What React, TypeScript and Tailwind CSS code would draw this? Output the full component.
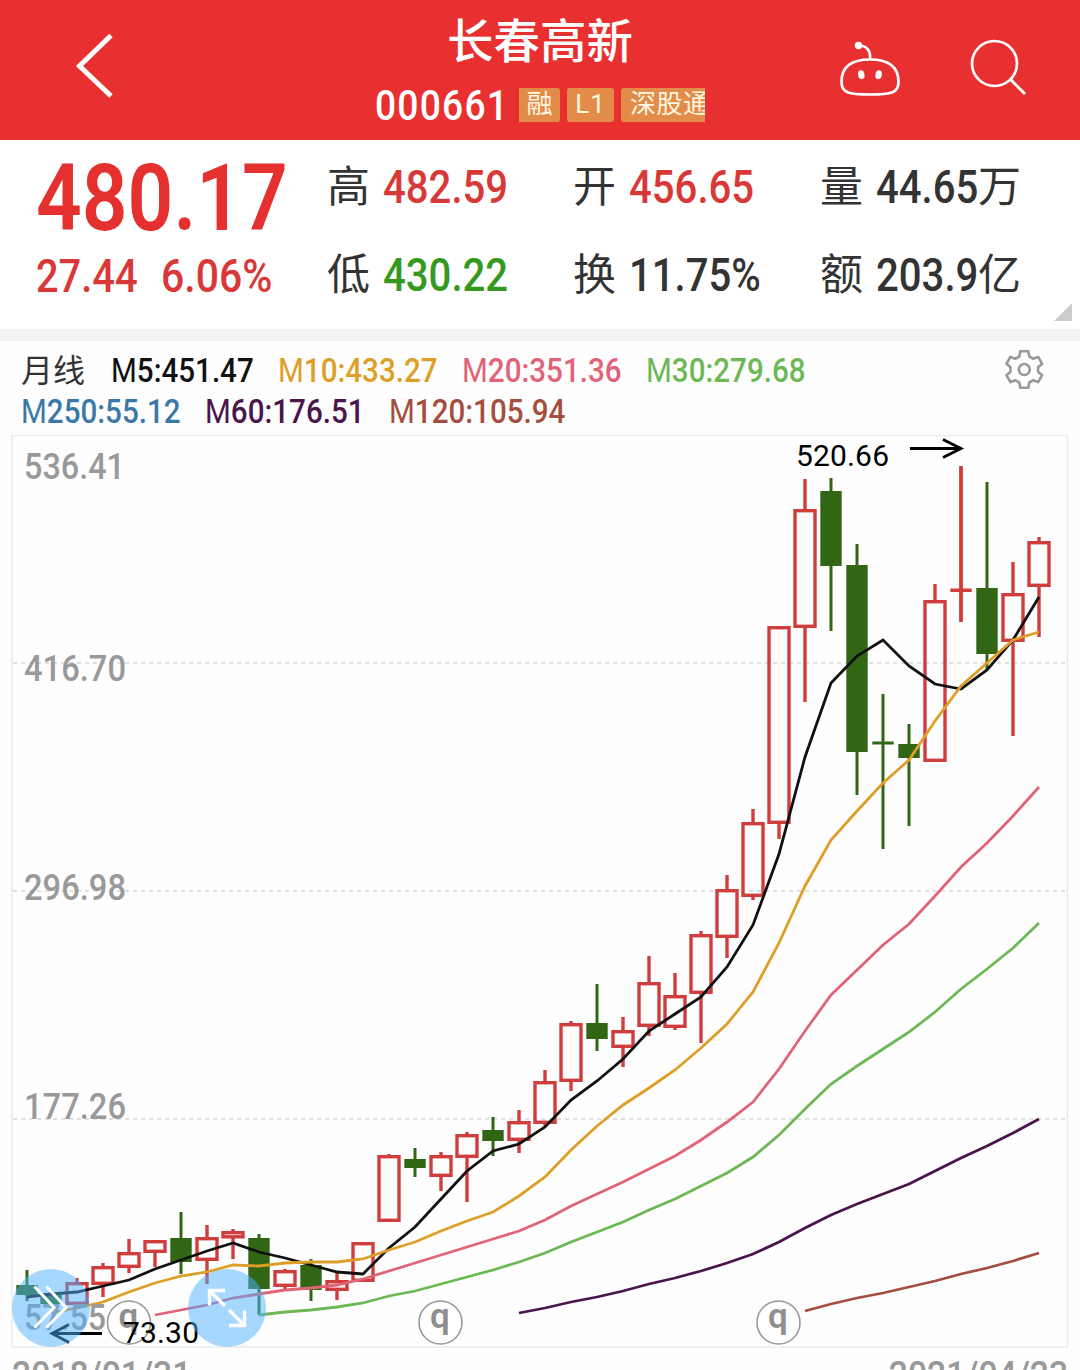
import React from 'react';
import clsx from 'clsx';

// x, high, body top, body bottom, low, 'u' (rise) or 'd' (fall)
type Candle = [number, number, number, number, number, 'u' | 'd'];

const candles: Candle[] = [
    [27, 1270, 1285, 1295, 1301, 'd'],
    [51, 1293, 1293, 1304, 1308, 'd'],
    [77, 1278, 1282, 1305, 1305, 'u'],
    [103, 1263, 1266, 1285, 1297, 'u'],
    [129, 1239, 1252, 1268, 1273, 'u'],
    [155, 1240, 1240, 1253, 1267, 'u'],
    [181, 1212, 1238, 1262, 1274, 'd'],
    [207, 1225, 1237, 1261, 1284, 'u'],
    [233, 1229, 1231, 1238.5, 1259, 'u'],
    [259, 1234, 1238, 1289, 1315, 'd'],
    [285, 1269, 1270, 1287, 1290, 'u'],
    [311, 1259, 1265, 1290, 1301, 'd'],
    [337, 1272, 1280, 1291, 1300, 'u'],
    [363, 1242, 1242, 1282, 1282, 'u'],
    [389, 1154, 1155, 1222, 1222, 'u'],
    [415, 1148, 1159, 1168, 1177, 'd'],
    [441, 1152, 1155, 1177, 1191, 'u'],
    [467, 1132, 1134, 1158, 1202, 'u'],
    [493, 1117, 1130, 1141, 1156, 'd'],
    [519, 1110, 1121, 1141, 1153, 'u'],
    [545, 1070, 1081, 1124, 1126, 'u'],
    [571, 1021, 1023, 1082, 1091, 'u'],
    [597, 984, 1023, 1039, 1051, 'd'],
    [623, 1017, 1030, 1048, 1067, 'u'],
    [649, 956, 982, 1027, 1036, 'u'],
    [675, 973, 995, 1028, 1030, 'u'],
    [701, 931, 934, 994, 1043, 'u'],
    [727, 875, 889, 938, 958, 'u'],
    [753, 809, 822, 897, 900, 'u'],
    [779, 626, 626, 824, 839, 'u'],
    [805, 479, 509, 628, 702, 'u'],
    [831, 478, 491, 566, 631, 'd'],
    [857, 544, 565, 752, 795, 'd'],
    [883, 694, 741.5, 744.5, 849, 'd'],
    [909, 724, 744, 758, 826, 'd'],
    [935, 584, 600, 762, 762, 'u'],
    [961, 466, 588.5, 592, 622, 'u'],
    [987, 482, 588, 654, 669, 'd'],
    [1013, 562, 593, 642, 736, 'u'],
    [1039, 537, 541, 587, 637, 'u'],
];

// Each average ends on the last candle, one value per candle
const averages = [
    { color: '#4a154b', values: [1313, 1308, 1302, 1297, 1291, 1284, 1278, 1271, 1263, 1254, 1242, 1228, 1215, 1204, 1194, 1184, 1171, 1158, 1146, 1133, 1119] },
    { color: '#a34e3e', values: [1311, 1304, 1298, 1293, 1287, 1281, 1274, 1268, 1261, 1253] },
    { color: '#6cb855', values: [1315, 1312, 1310, 1307, 1303, 1296, 1291, 1284, 1277, 1270, 1262, 1253, 1242, 1232, 1222, 1210, 1199, 1186, 1173, 1157, 1135, 1109, 1084, 1066, 1049, 1032, 1012, 989, 969, 948, 923] },
    { color: '#e16377', values: [1315, 1310, 1305, 1298, 1294, 1290, 1288, 1285, 1279, 1271, 1263, 1255, 1247, 1239, 1231, 1220, 1206, 1194, 1182, 1169, 1156, 1140, 1122, 1102, 1069, 1031, 995, 970, 945, 924, 896, 867, 843, 816, 787] },
    { color: '#111111', values: [1297, 1294, 1292, 1286, 1280, 1269, 1260, 1251, 1243, 1252, 1258, 1265, 1272, 1274, 1248, 1227, 1199, 1171, 1151, 1144, 1127, 1100, 1081, 1059, 1031, 1014, 997, 967, 925, 854, 757, 683, 656, 640, 666, 684, 689, 670, 640, 597] },
    { color: '#dd9f27', values: [1313, 1308, 1302, 1292, 1283, 1276, 1272, 1265, 1266, 1263, 1262, 1262, 1259, 1250, 1242, 1231, 1221, 1212, 1196, 1177, 1150, 1126, 1105, 1088, 1070, 1048, 1024, 992, 943, 886, 840, 811, 783, 760, 721, 686, 663, 640, 632] },
];

const axisLabels = [
    { text: '536.41', y: 478.5, w: 101 },
    { text: '416.70', y: 680.5, w: 102 },
    { text: '296.98', y: 899.5, w: 102 },
    { text: '177.26', y: 1118.5, w: 102 },
    { text: '57.55', y: 1329.5, w: 82 },
];

const linePoints = (values: number[]) =>
    values.map((y, i) => `${candles[candles.length - values.length + i][0]},${y}`).join(' ');

// Condensed number text, squeezed from its left edge
const Num: React.FC<{ className?: string; children: React.ReactNode }> = ({ className, children }) => (
    <span className={clsx('block origin-left whitespace-nowrap font-medium', className)}>{children}</span>
);

const Tag: React.FC<{ className: string; children: React.ReactNode }> = ({ className, children }) => (
    <span className={clsx('flex h-[34px] shrink-0 items-center whitespace-nowrap bg-[#e38b49] pb-[1px] text-[26px] leading-none text-[#fff6e0]', className)}>
        {children}
    </span>
);

const Header: React.FC = () => (
    <header className="flex h-[140px] justify-between bg-[#e83030] text-white">
        <div className="w-[375px] pl-[75px] pt-[32px]">
            <svg width="40" height="68" viewBox="0 0 40 68" fill="none">
                <path d="M36 3.500 L4.500 34 L36 64" stroke="#fff" strokeWidth="5" />
            </svg>
        </div>
        <div className="w-[330px]">
            <h1 className="mt-[11px] h-[62px] text-center text-[46.5px] font-medium leading-[62px]">长春高新</h1>
            <div className="mt-[14px] flex h-[35px] items-center overflow-hidden">
                <Num className="w-[144px] shrink-0 scale-x-[.865] text-[43px] leading-[34px] tracking-[1.4px]">000661</Num>
                <Tag className="w-[41px] justify-center rounded-r-[3px]">融</Tag>
                <Tag className="ml-[7px] w-[47px] justify-center rounded-[3px] tracking-[1px]">L1</Tag>
                <Tag className="ml-[7px] w-[100px] rounded-[3px] pl-[9px] tracking-[.5px]">深股通</Tag>
            </div>
        </div>
        <div className="flex w-[375px] gap-[69px] pl-[134px] pt-[38px]">
            <svg width="62" height="62" viewBox="0 0 62 62" fill="none">
                <path d="M31 21.500 C49 21.500 59.500 28 59.500 44 C59.500 54.500 53 56.500 31 56.500 C9 56.500 2.500 54.500 2.500 44 C2.500 28 13 21.500 31 21.500 Z" stroke="#fff" strokeWidth="2.700" />
                <path d="M19.500 7.500 C28 7.500 32 13 31 21.500" stroke="#fff" strokeWidth="2.700" />
                <circle cx="19.500" cy="7.500" r="3.700" fill="#fff" />
                <ellipse cx="22.300" cy="36.700" rx="3.200" ry="4.400" fill="#fff" transform="rotate(-10 22.300 36.700)" />
                <ellipse cx="39.600" cy="36.700" rx="3.200" ry="4.400" fill="#fff" transform="rotate(10 39.600 36.700)" />
            </svg>
            <svg width="60" height="62" viewBox="0 0 60 62" fill="none" stroke="#fff" strokeWidth="2.700">
                <circle cx="24.500" cy="25.500" r="22.500" />
                <path d="M40.500 41.500 L55 56" strokeWidth="3" />
            </svg>
        </div>
    </header>
);

const Stat: React.FC<{ label: string; value: string; unit?: string; color?: string }> = ({ label, value, unit, color }) => (
    <div className="flex h-[88px] items-center text-[#333]">
        <span className="w-[56px] shrink-0 text-[43px] leading-[88px]">{label}</span>
        <span className={clsx('flex origin-left scale-x-[.872] whitespace-nowrap text-[46px] font-medium leading-[88px]', color)}>
            {value}
            {unit && <span className="origin-left scale-x-[1.147] text-[43px] font-normal">{unit}</span>}
        </span>
    </div>
);

const Quote: React.FC = () => (
    <section className="relative flex h-[189px] bg-white">
        <div className="w-[327px] pl-[36px] text-[#e53030]">
            <Num className="mt-[12px] h-[93px] scale-x-[.862] text-[93px] font-semibold leading-[93px]">480.17</Num>
            <div className="mt-[7px] flex text-[46px] leading-[48px] text-[#d93838]">
                <Num className="w-[125px] scale-x-[.865]">27.44</Num>
                <Num className="scale-x-[.89]">6.06%</Num>
            </div>
        </div>
        <div className="grid h-[176px] grid-cols-[246px_247px_260px] pt-[3px]">
            <Stat label="高" value="482.59" color="text-[#d93838]" />
            <Stat label="开" value="456.65" color="text-[#d93838]" />
            <Stat label="量" value="44.65" unit="万" />
            <Stat label="低" value="430.22" color="text-[#35991f]" />
            <Stat label="换" value="11.75%" />
            <Stat label="额" value="203.9" unit="亿" />
        </div>
        <svg className="absolute bottom-[8px] right-[8px]" width="18" height="18" viewBox="0 0 18 18">
            <path d="M18 0 V18 H0 Z" fill="#ccc" />
        </svg>
    </section>
);

const Average: React.FC<{ className: string; children: string }> = ({ className, children }) => (
    <Num className={clsx('scale-x-[.87] text-[34px] leading-[41px]', className)}>
        <span className="font-normal">M</span>
        {children}
    </Num>
);

const Legend: React.FC = () => (
    <section className="flex h-[93px] justify-between pl-[21px] pr-[35px] pt-[9px]">
        <div>
            <div className="flex h-[41px]">
                <span className="w-[90px] pt-[1px] text-[32px] leading-[41px] text-[#333]">月线</span>
                <Average className="w-[167px] text-[#111]">5:451.47</Average>
                <Average className="w-[184px] text-[#dd9f27]">10:433.27</Average>
                <Average className="w-[184px] text-[#e16377]">20:351.36</Average>
                <Average className="text-[#6cb855]">30:279.68</Average>
            </div>
            <div className="flex h-[41px]">
                <Average className="w-[184px] text-[#3a78a8]">250:55.12</Average>
                <Average className="w-[184px] text-[#4a154b]">60:176.51</Average>
                <Average className="text-[#a34e3e]">120:105.94</Average>
            </div>
        </div>
        <svg width="42" height="42" viewBox="-21.300 -19.500 42 42" fill="none" stroke="#999" strokeWidth="2.600" strokeLinejoin="round">
            <path d="M-4 -18.300 H4 L5 -13 L8.760 -10.830 L13.850 -12.600 L17.850 -5.690 L13.760 -2.170 V2.170 L17.850 5.690 L13.850 12.600 L8.760 10.830 L5 13 L4 18.300 H-4 L-5 13 L-8.760 10.830 L-13.850 12.600 L-17.850 5.690 L-13.760 2.170 V-2.170 L-17.850 -5.690 L-13.850 -12.600 L-8.760 -10.830 L-5 -13 Z" />
            <circle r="5.500" />
        </svg>
    </section>
);

const CandleShape: React.FC<{ candle: Candle }> = ({ candle: [x, high, top, bottom, low, dir] }) => {
    if (dir === 'd' || bottom - top < 5) {
        const fill = dir === 'd' ? '#316614' : '#cf3d3d';
        return (
            <g fill={fill}>
                <rect x={x - (dir === 'd' ? 1.5 : 1.9)} y={high} width={dir === 'd' ? 3 : 3.8} height={low - high} />
                <rect x={x - 10.7} y={top} width="21.4" height={bottom - top} />
            </g>
        );
    }
    return (
        <g stroke="#cf3d3d" strokeWidth="3.400" fill="none">
            <path d={`M${x} ${high} V${top + 1} M${x} ${bottom - 1} V${Math.max(low, bottom - 1)}`} />
            <rect x={x - 10} y={top + 1.7} width="20" height={bottom - top - 3.4} />
        </g>
    );
};

const Chart: React.FC = () => (
    <section className="relative h-[914px]">
        <svg className="block" width="1080" height="914" viewBox="0 434 1080 914" fill="none">
            <path d="M12 435.500 H1067.500 V1347 H12 Z" stroke="#ebebeb" strokeWidth="1.600" />
            {[663, 891, 1119].map((y) => (
                <path key={y} d={`M13 ${y} H1066`} stroke="#d6d6d6" strokeWidth="1.600" strokeDasharray="4 4" />
            ))}
            {candles.map((candle) => (
                <CandleShape key={candle[0]} candle={candle} />
            ))}
            {averages.map((line) => (
                <polyline key={line.color} points={linePoints(line.values)} stroke={line.color} strokeWidth="2.800" />
            ))}
            <g fill="#999" fontSize="37" fontWeight="500">
                {axisLabels.map((label) => (
                    <text key={label.text} x="24" y={label.y} textLength={label.w} lengthAdjust="spacingAndGlyphs">
                        {label.text}
                    </text>
                ))}
            </g>
            {[129, 440.5, 778.5].map((x) => (
                <g key={x}>
                    <circle cx={x} cy="1322.500" r="21.500" fill="#fff" fillOpacity=".7" stroke="#999" strokeWidth="1.600" />
                    <text x={x - 0.5} y="1327.500" fill="#8f8f8f" fontSize="35" fontWeight="600" textAnchor="middle">q</text>
                </g>
            ))}
            <g fill="#000" fontSize="30">
                <text x="796" y="466" textLength="93">520.66</text>
                <text x="123" y="1343" textLength="76">73.30</text>
            </g>
            <g stroke="#000" strokeWidth="2.800">
                <path d="M910 448.500 H961 M943 439.500 L961 448.500 L943 457.500" />
                <path d="M102 1333.500 H52 M69 1324.500 L52 1333.500 L69 1342.500" />
            </g>
        </svg>
        {/* Floating chart buttons */}
        <button className="absolute left-[12px] top-[835px] size-[78px] rounded-full bg-[#4db1ff]/50">
            <svg width="78" height="78" viewBox="0 0 78 78" fill="none" stroke="#fff" strokeWidth="3">
                <path d="M22.500 17.500 L42 38.500 L22.500 58.500 M34.500 17.500 L54 38.500 L34.500 58.500" />
            </svg>
        </button>
        <button className="absolute left-[188px] top-[835px] size-[78px] rounded-full bg-[#4db1ff]/50">
            <svg width="78" height="78" viewBox="0 0 78 78" fill="none" stroke="#fff" strokeWidth="3.400">
                <path d="M37 37 L22 22 M37 21.500 H21.500 V36.500 M41 41 L56 56 M41 56.500 H56.500 V41.500" />
            </svg>
        </button>
    </section>
);

const App: React.FC = () => (
    <main className="flex h-[1370px] w-[1080px] flex-col overflow-hidden bg-[#fefefe] font-[Roboto,'Noto_Sans_CJK_SC',sans-serif]">
        <Header />
        <Quote />
        <div className="h-[12px] shrink-0 bg-[#f4f4f4]" />
        <Legend />
        <Chart />
        <footer className="flex h-[22px] justify-between overflow-hidden px-[12px] pt-[5px] text-[37px] leading-[44px] text-[#999]">
            <Num className="scale-x-[.91]">2018/01/31</Num>
            <Num className="origin-right scale-x-[.91]">2021/04/23</Num>
        </footer>
    </main>
);

export default App;
